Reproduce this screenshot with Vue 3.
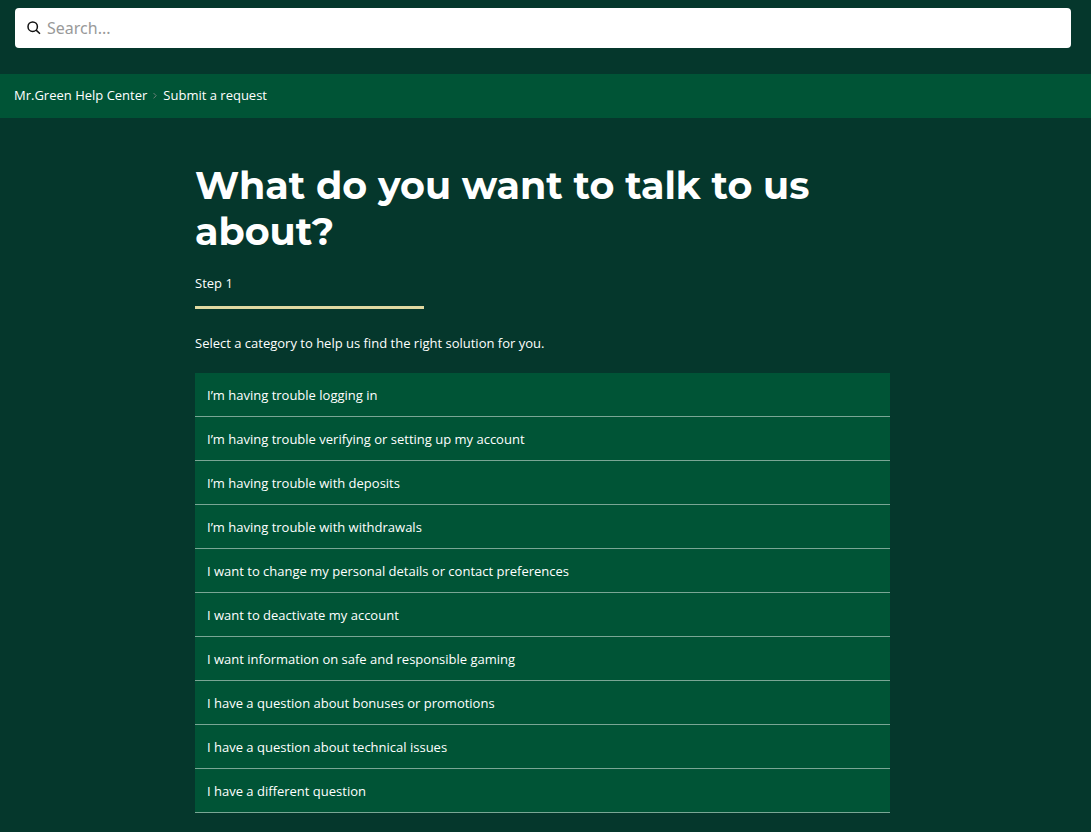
<script setup>
const categories = [
  'I’m having trouble logging in',
  'I’m having trouble verifying or setting up my account',
  'I’m having trouble with deposits',
  'I’m having trouble with withdrawals',
  'I want to change my personal details or contact preferences',
  'I want to deactivate my account',
  'I want information on safe and responsible gaming',
  'I have a question about bonuses or promotions',
  'I have a question about technical issues',
  'I have a different question',
]
</script>

<template>
  <div class="page">
    <form class="search" role="search" @submit.prevent>
      <label class="search-box">
        <svg class="search-icon" viewBox="0 0 14 14" aria-hidden="true">
          <circle cx="5.7" cy="5.7" r="4.7" />
          <path d="M9.1 9.1 L13 12.8" />
        </svg>
        <input type="search" placeholder="Search..." aria-label="Search" />
      </label>
    </form>

    <nav class="breadcrumbs" aria-label="Breadcrumbs">
      <a href="#">Mr.Green Help Center</a>
      <svg class="chevron" viewBox="0 0 4 8" aria-hidden="true">
        <path d="M0.5 2 L3.2 4.7 L0.5 7.4" />
      </svg>
      <a href="#">Submit a request</a>
    </nav>

    <main class="main">
      <div class="content">
        <h1>What do you want to talk to us about?</h1>
        <p class="step">Step 1</p>
        <div class="progress"></div>
        <p class="hint">Select a category to help us find the right solution for you.</p>
        <ul class="categories">
          <li v-for="category in categories" :key="category">
            <a href="#">{{ category }}</a>
          </li>
        </ul>
      </div>
    </main>
  </div>
</template>

<style>
body {
  margin: 0;
  background: #05372c;
}
</style>

<style scoped>
.page {
  min-height: 100vh;
  box-sizing: border-box;
  color: #fff;
  font: 13px/20px "Open Sans", "Noto Sans", sans-serif;
}

.search {
  padding: 8px 20px 26px 15px;
}

.search-box {
  display: flex;
  align-items: center;
  gap: 6px;
  height: 40px;
  padding: 0 12px;
  border-radius: 4px;
  box-sizing: border-box;
  background: #fff;
}

.search-icon {
  flex: none;
  width: 14px;
  height: 14px;
  fill: none;
  stroke: #111;
  stroke-width: 1.5;
}

.search-box input {
  flex: 1;
  min-width: 0;
  padding: 0;
  border: 0;
  outline: 0;
  background: none;
  color: #222;
  font: 16px/24px "Noto Sans", "Open Sans", sans-serif;
  appearance: none;
}

.search-box input::placeholder {
  color: #999;
}

.breadcrumbs {
  display: flex;
  align-items: center;
  gap: 6px;
  padding: 11px 14px 13px;
  background: #005436;
}

.chevron {
  width: 4px;
  height: 8px;
  fill: none;
  stroke: #6b7f76;
  stroke-width: 1;
}

a {
  color: inherit;
  text-decoration: none;
}

.main {
  padding: 45px 20px 18px 14px;
}

.content {
  max-width: 695px;
  margin: 0 auto;
}

h1 {
  margin: 0 0 18px;
  font: 700 38px/46px Montserrat, Inter, sans-serif;
}

.step {
  margin: 0;
}

.progress {
  width: 33%;
  height: 3px;
  margin: 13px 0 24px;
  background: #e0d9a1;
}

.hint {
  margin: 0 0 20px;
}

.categories {
  margin: 0;
  padding: 0;
  list-style: none;
}

.categories a {
  display: block;
  padding: 12px 12px 11px;
  border-bottom: 1px solid #7aa695;
  background: #005436;
}
</style>
